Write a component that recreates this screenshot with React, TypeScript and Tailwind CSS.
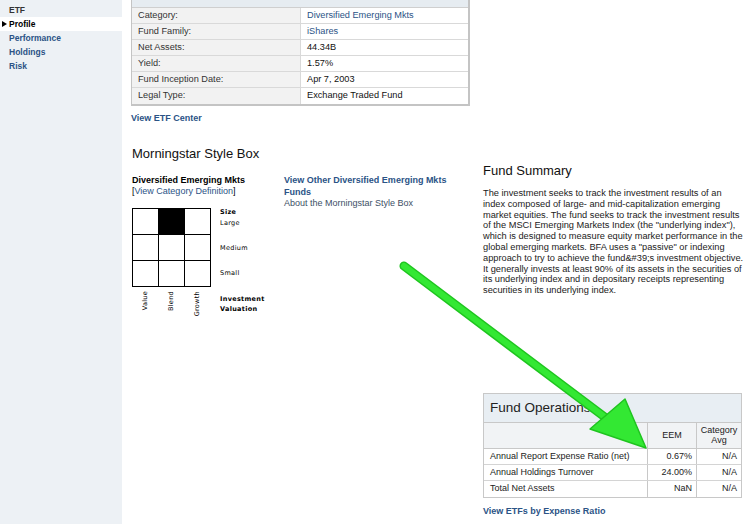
const LINK = 'text-[#2b5386]';

const profileRows: [string, string, boolean][] = [
  ['Category:', 'Diversified Emerging Mkts', true],
  ['Fund Family:', 'iShares', true],
  ['Net Assets:', '44.34B', false],
  ['Yield:', '1.57%', false],
  ['Fund Inception Date:', 'Apr 7, 2003', false],
  ['Legal Type:', 'Exchange Traded Fund', false],
];

const opsRows = [
  ['Annual Report Expense Ratio (net)', '0.67%', 'N/A'],
  ['Annual Holdings Turnover', '24.00%', 'N/A'],
  ['Total Net Assets', 'NaN', 'N/A'],
];

function Sidebar() {
  return (
    <div className="w-[122px] shrink-0 bg-[#edf1f5] pt-[3px] text-[8.5px] font-bold">
      <div className="flex h-[14px] items-center pl-[9px] text-[#333]">ETF</div>
      <div className="flex h-[14px] items-center bg-white text-black">
        <span className="ml-[2px] mr-[2px] h-0 w-0 border-y-[3.5px] border-l-[5px] border-y-transparent border-l-black" />
        Profile
      </div>
      <div className={`flex h-[14px] items-center pl-[9px] ${LINK}`}>Performance</div>
      <div className={`flex h-[14px] items-center pl-[9px] ${LINK}`}>Holdings</div>
      <div className={`flex h-[14px] items-center pl-[9px] ${LINK}`}>Risk</div>
    </div>
  );
}

function StyleBox() {
  const cells = [0, 1, 2, 3, 4, 5, 6, 7, 8];
  return (
    <div className="mt-[12px] flex">
      <div className="w-[153px] pl-[1px]">
        <div className="text-[9px] font-bold leading-[12px] text-black">Diversified Emerging Mkts</div>
        <div className="text-[9px] leading-[11px] text-black">
          [<span className={LINK}>View Category Definition</span>]
        </div>
        <div className="mt-[11px] flex font-['DejaVu_Sans',sans-serif] text-[6.5px] tracking-[0.3px] text-black">
          <div>
            <div className="grid w-[79px] grid-cols-3 border-l border-t border-black">
              {cells.map((i) => (
                <div key={i} className={`h-[26px] border-b border-r border-black ${i === 1 ? 'bg-black' : ''}`} />
              ))}
            </div>
            <div className="mt-[4px] flex items-start">
              {['Value', 'Blend', 'Growth'].map((t) => (
                <div key={t} className="flex w-[26px] justify-center">
                  <div className="rotate-180 leading-[8px] [writing-mode:vertical-rl]">{t}</div>
                </div>
              ))}
            </div>
          </div>
          <div className="ml-[9px] flex flex-col">
            <div className="font-bold leading-[9px]">Size</div>
            <div className="mt-[2px] leading-[9px]">Large</div>
            <div className="mt-[16px] leading-[9px]">Medium</div>
            <div className="mt-[16px] leading-[9px]">Small</div>
            <div className="mt-[16px] font-bold leading-[10px]">Investment</div>
            <div className="font-bold leading-[10px]">Valuation</div>
          </div>
        </div>
      </div>
      <div className="w-[175px]">
        <div className={`text-[9px] font-bold leading-[12px] ${LINK}`}>View Other Diversified Emerging Mkts Funds</div>
        <div className="text-[9px] leading-[11px] text-[#3d4f66]">About the Morningstar Style Box</div>
      </div>
    </div>
  );
}

function LeftColumn() {
  return (
    <div className="w-[339px] shrink-0">
      <div className="border-b-2 border-l border-r-2 border-[#c4c4c4]">
        <div className="h-[8px] border-b border-[#cfcfcf] bg-[#e6ecf1]" />
        {profileRows.map(([label, value, link]) => (
          <div key={label} className="flex h-[16px] border-b border-[#d9d9d9] text-[9.2px] last:border-b-0">
            <div className="flex w-[169px] items-center border-r border-[#d9d9d9] bg-[#f2f2f2] pl-[6px] text-[#333]">
              {label}
            </div>
            <div className={`flex flex-1 items-center pl-[6px] ${link ? LINK : 'text-[#111]'}`}>{value}</div>
          </div>
        ))}
      </div>
      <div className={`mt-[6px] text-[9px] font-bold leading-[12px] ${LINK}`}>View ETF Center</div>
      <div className="mt-[22px] pl-[1px] text-[13px] leading-[16px] text-[#111]">Morningstar Style Box</div>
      <StyleBox />
    </div>
  );
}

function RightColumn() {
  return (
    <div className="ml-[13px] w-[260px] shrink-0 pt-[163px]">
      <div className="text-[13px] leading-[16px] text-[#111]">Fund Summary</div>
      <p className="mt-[9px] w-[262px] text-[9.25px] leading-[10.8px] text-[#222]">
        The investment seeks to track the investment results of an index composed of large- and
        mid-capitalization emerging market equities. The fund seeks to track the investment results
        of the MSCI Emerging Markets Index (the "underlying index"), which is designed to measure
        equity market performance in the global emerging markets. BFA uses a "passive" or indexing
        approach to try to achieve the fund&amp;#39;s investment objective. It generally invests at
        least 90% of its assets in the securities of its underlying index and in depositary receipts
        representing securities in its underlying index.
      </p>
      <div className="mt-[97px] w-[259px] border border-[#c8c8c8] text-[9px]">
        <div className="flex h-[29px] items-center border-b border-[#c8c8c8] bg-[#e8eef3] pl-[6px] text-[13.5px] text-[#222]">
          Fund Operations
        </div>
        <div className="flex h-[26px] border-b border-[#c8c8c8] bg-[#f1f3f5] text-[#222]">
          <div className="w-[164px] border-r border-[#c8c8c8]" />
          <div className="flex w-[49px] items-center justify-center border-r border-[#c8c8c8]">EEM</div>
          <div className="flex flex-1 items-center justify-center text-center leading-[10px]">
            Category
            <br />
            Avg
          </div>
        </div>
        {opsRows.map(([label, eem, avg]) => (
          <div key={label} className="flex h-[16px] border-b border-[#d4d4d4] text-[#222] last:border-b-0">
            <div className="flex w-[164px] items-center border-r border-[#c8c8c8] pl-[6px]">{label}</div>
            <div className="flex w-[49px] items-center justify-end border-r border-[#c8c8c8] pr-[4px]">{eem}</div>
            <div className="flex flex-1 items-center justify-end pr-[4px]">{avg}</div>
          </div>
        ))}
      </div>
      <div className={`mt-[7px] text-[9px] font-bold leading-[12px] ${LINK}`}>View ETFs by Expense Ratio</div>
    </div>
  );
}

function Arrow() {
  return (
    <svg className="pointer-events-none absolute left-0 top-0" width="750" height="524" viewBox="0 0 750 524">
      <line x1="404" y1="266" x2="606" y2="418" stroke="#1fc41f" strokeWidth="9" strokeLinecap="round" />
      <line x1="404" y1="266" x2="606" y2="418" stroke="#33e833" strokeWidth="6" strokeLinecap="round" />
      <polygon points="646,448 590,429 625,399" fill="#33e833" stroke="#1fc41f" strokeWidth="1.5" strokeLinejoin="round" />
    </svg>
  );
}

export default function App() {
  return (
    <div className="relative flex h-[524px] w-[750px] overflow-hidden bg-white font-['Liberation_Sans',Arial,sans-serif] text-[#222]">
      <Sidebar />
      <div className="ml-[9px] flex">
        <LeftColumn />
        <RightColumn />
      </div>
      <Arrow />
    </div>
  );
}
